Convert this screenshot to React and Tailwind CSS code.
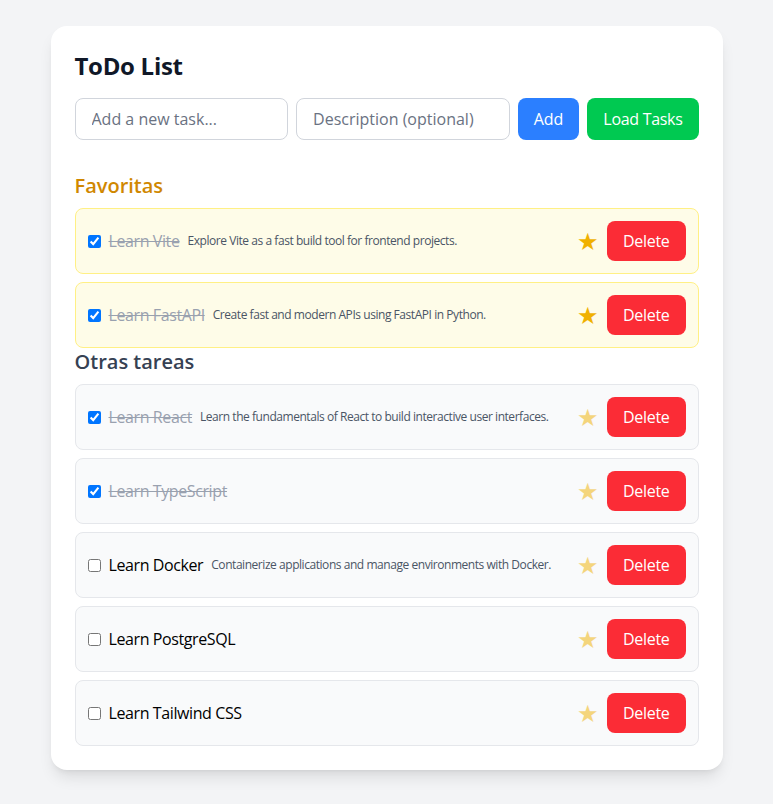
import React, { useState } from "react";

const INITIAL = [
  { id: 1, title: "Learn Vite", desc: "Explore Vite as a fast build tool for frontend projects.", done: true, fav: true },
  { id: 2, title: "Learn FastAPI", desc: "Create fast and modern APIs using FastAPI in Python.", done: true, fav: true },
  { id: 3, title: "Learn React", desc: "Learn the fundamentals of React to build interactive user interfaces.", done: true, fav: false },
  { id: 4, title: "Learn TypeScript", desc: "", done: true, fav: false },
  { id: 5, title: "Learn Docker", desc: "Containerize applications and manage environments with Docker.", done: false, fav: false },
  { id: 6, title: "Learn PostgreSQL", desc: "", done: false, fav: false },
  { id: 7, title: "Learn Tailwind CSS", desc: "", done: false, fav: false },
];

function TaskItem({ task, onToggle, onFav, onDelete }) {
  return (
    <li
      className={`flex items-center justify-between p-3 rounded-lg border ${
        task.fav ? "bg-yellow-50 border-yellow-200" : "bg-gray-50 border-gray-200"
      }`}
    >
      <div className="flex items-center min-w-0 whitespace-nowrap">
        <input type="checkbox" checked={task.done} onChange={() => onToggle(task.id)} className="w-[13px] h-[13px] shrink-0" />
        <span className={`ml-2 text-base tracking-[-0.4px] ${task.done ? "line-through text-gray-400" : "text-black"}`}>
          {task.title}
        </span>
        {task.desc && <span className="ml-2 text-xs text-gray-600 tracking-[-0.45px]">{task.desc}</span>}
      </div>
      <div className="flex items-center gap-2 shrink-0 ml-2">
        <button
          onClick={() => onFav(task.id)}
          className={`text-2xl leading-none text-yellow-500 ${task.fav ? "" : "opacity-50"}`}
        >
          ★
        </button>
        <button onClick={() => onDelete(task.id)} className="px-4 py-2 rounded-lg bg-red-500 text-white tracking-[-0.3px]">
          Delete
        </button>
      </div>
    </li>
  );
}

export default function App() {
  const [tasks, setTasks] = useState(INITIAL);
  const [title, setTitle] = useState("");
  const [desc, setDesc] = useState("");

  const toggle = (id) => setTasks((t) => t.map((x) => (x.id === id ? { ...x, done: !x.done } : x)));
  const fav = (id) => setTasks((t) => t.map((x) => (x.id === id ? { ...x, fav: !x.fav } : x)));
  const remove = (id) => setTasks((t) => t.filter((x) => x.id !== id));
  const add = () => {
    if (!title.trim()) return;
    setTasks((t) => [...t, { id: Date.now(), title, desc, done: false, fav: false }]);
    setTitle("");
    setDesc("");
  };

  const favs = tasks.filter((t) => t.fav);
  const others = tasks.filter((t) => !t.fav);

  return (
    <div className="min-h-screen bg-gray-100 pt-[26px] pb-8 font-['Open_Sans',sans-serif]">
      <div className="max-w-2xl mx-auto bg-white rounded-2xl shadow-lg p-6">
        <h1 className="text-2xl font-bold text-gray-900 mb-4 tracking-[-0.3px]">ToDo List</h1>
        <div className="flex gap-2 mb-8">
          <input
            value={title}
            onChange={(e) => setTitle(e.target.value)}
            placeholder="Add a new task..."
            className="flex-1 min-w-0 px-4 py-2 border border-gray-300 rounded-lg text-base placeholder:text-gray-500"
          />
          <input
            value={desc}
            onChange={(e) => setDesc(e.target.value)}
            placeholder="Description (optional)"
            className="flex-1 min-w-0 px-4 py-2 border border-gray-300 rounded-lg text-base placeholder:text-gray-500"
          />
          <button onClick={add} className="px-4 py-2 rounded-lg bg-blue-500 text-white">
            Add
          </button>
          <button className="px-4 py-2 rounded-lg bg-green-500 text-white whitespace-nowrap tracking-[-0.3px]">Load Tasks</button>
        </div>

        <h2 className="text-xl font-semibold text-yellow-600 mb-2">Favoritas</h2>
        <ul className="space-y-2">
          {favs.map((t) => (
            <TaskItem key={t.id} task={t} onToggle={toggle} onFav={fav} onDelete={remove} />
          ))}
        </ul>

        <h2 className="text-xl font-semibold text-gray-700 mb-2">Otras tareas</h2>
        <ul className="space-y-2">
          {others.map((t) => (
            <TaskItem key={t.id} task={t} onToggle={toggle} onFav={fav} onDelete={remove} />
          ))}
        </ul>
      </div>
    </div>
  );
}
